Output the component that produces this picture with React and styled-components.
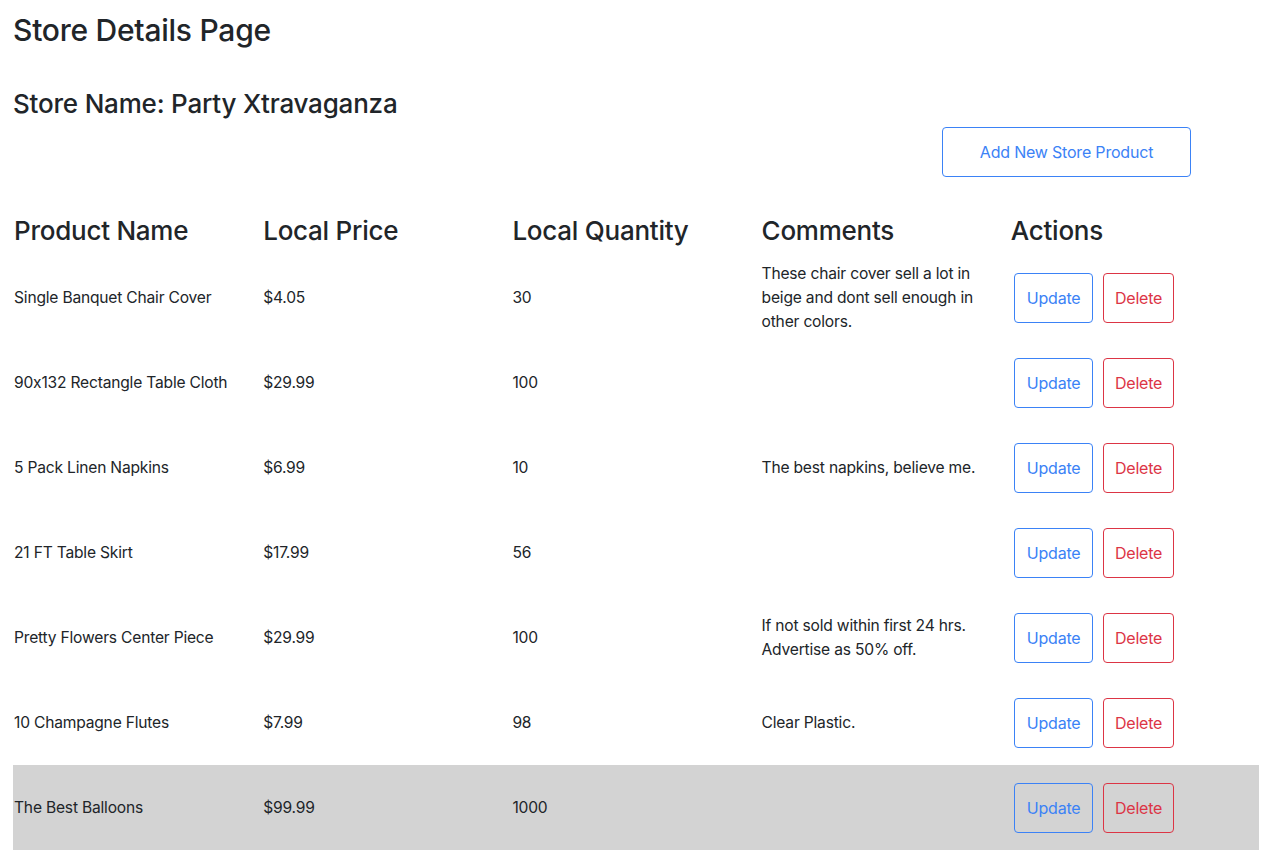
import React from 'react';
import styled, { createGlobalStyle } from 'styled-components';

const GlobalStyle = createGlobalStyle`
  body {
    margin: 0;
    background: #fff;
    color: #212529;
    font-family: Inter, "Noto Sans", "Liberation Sans", sans-serif;
    font-feature-settings: "calt" 0;
    -webkit-font-smoothing: antialiased;
  }
`;

const Page = styled.div`
  padding: 0 10px 0 13px;
`;

const Title = styled.h1`
  margin: 11px 0 0;
  font-size: 30px;
  font-weight: 500;
  line-height: 38px;
  letter-spacing: -0.25px;
`;

const StoreName = styled.h2`
  margin: 39px 0 0;
  font-size: 26px;
  font-weight: 500;
  line-height: 32px;
  letter-spacing: -0.2px;
`;

const Toolbar = styled.div`
  display: flex;
  justify-content: flex-end;
  padding-right: 68px;
  margin-top: 7px;
`;

const Button = styled.button`
  font-family: inherit;
  font-size: 16px;
  line-height: 24px;
  letter-spacing: -0.2px;
  padding: 12px ${(p) => (p.$variant === 'danger' ? '10.5px' : '12px')};
  background: transparent;
  border: 1px solid ${(p) => (p.$variant === 'danger' ? '#dc3545' : '#3b82f6')};
  color: ${(p) => (p.$variant === 'danger' ? '#dc3545' : '#3b82f6')};
  border-radius: 4px;
  cursor: pointer;
  width: ${(p) => p.$width || 'auto'};
`;

const Table = styled.table`
  width: 1246px;
  table-layout: fixed;
  border-collapse: collapse;
  margin-top: 29px;
`;

const HeadCell = styled.th`
  text-align: left;
  font-size: 26px;
  font-weight: 500;
  line-height: 34px;
  padding: 8px 0 7px 1px;
  letter-spacing: -0.25px;
`;

const Row = styled.tr`
  height: 85px;
  background: ${(p) => (p.$highlight ? '#d3d3d3' : 'transparent')};
`;

const Cell = styled.td`
  font-size: 15.6px;
  line-height: 24px;
  letter-spacing: -0.2px;
  padding: 0 24px 0 1px;
  vertical-align: middle;
`;

const Actions = styled.div`
  display: flex;
  gap: 10px;
  padding-left: 3px;
`;

const products = [
  { name: 'Single Banquet Chair Cover', price: '$4.05', qty: '30', comment: 'These chair cover sell a lot in beige and dont sell enough in other colors.' },
  { name: '90x132 Rectangle Table Cloth', price: '$29.99', qty: '100', comment: '' },
  { name: '5 Pack Linen Napkins', price: '$6.99', qty: '10', comment: 'The best napkins, believe me.' },
  { name: '21 FT Table Skirt', price: '$17.99', qty: '56', comment: '' },
  { name: 'Pretty Flowers Center Piece', price: '$29.99', qty: '100', comment: 'If not sold within first 24 hrs. Advertise as 50% off.' },
  { name: '10 Champagne Flutes', price: '$7.99', qty: '98', comment: 'Clear Plastic.' },
  { name: 'The Best Balloons', price: '$99.99', qty: '1000', comment: '', highlight: true },
];

export default function App() {
  return (
    <Page>
      <GlobalStyle />
      <Title>Store Details Page</Title>
      <StoreName>Store Name: Party Xtravaganza</StoreName>
      <Toolbar>
        <Button $width="249px">Add New Store Product</Button>
      </Toolbar>
      <Table>
        <thead>
          <tr>
            <HeadCell>Product Name</HeadCell>
            <HeadCell>Local Price</HeadCell>
            <HeadCell>Local Quantity</HeadCell>
            <HeadCell>Comments</HeadCell>
            <HeadCell>Actions</HeadCell>
          </tr>
        </thead>
        <tbody>
          {products.map((p) => (
            <Row key={p.name} $highlight={p.highlight}>
              <Cell>{p.name}</Cell>
              <Cell>{p.price}</Cell>
              <Cell>{p.qty}</Cell>
              <Cell>{p.comment}</Cell>
              <Cell>
                <Actions>
                  <Button>Update</Button>
                  <Button $variant="danger">Delete</Button>
                </Actions>
              </Cell>
            </Row>
          ))}
        </tbody>
      </Table>
    </Page>
  );
}
